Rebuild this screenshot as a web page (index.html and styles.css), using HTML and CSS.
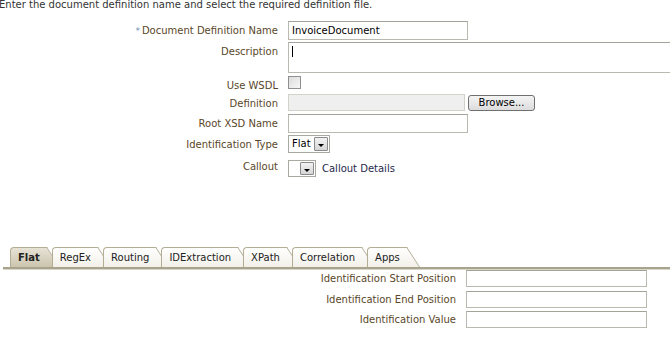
FILE: index.html
```html
<!DOCTYPE html>
<html lang="en">
<head>
    <meta charset="UTF-8">
    <meta name="viewport" content="width=device-width, initial-scale=1.0">
    <title>Document Definition</title>
    <link rel="stylesheet" href="styles.css">
</head>
<body>
    <p class="intro">Enter the document definition name and select the required definition file.</p>

    <div class="form">
        <div class="row row-name">
            <div class="label"><span class="star">*</span>Document Definition Name</div>
            <div class="field name">InvoiceDocument</div>
        </div>
        <div class="row row-desc">
            <div class="label">Description</div>
            <div class="field area"><span class="caret"></span></div>
        </div>
        <div class="row row-wsdl">
            <div class="label">Use WSDL</div>
            <div class="check"></div>
        </div>
        <div class="row row-def">
            <div class="label">Definition</div>
            <div class="field def"></div>
            <div class="browse">Browse...</div>
        </div>
        <div class="row row-root">
            <div class="label">Root XSD Name</div>
            <div class="field name"></div>
        </div>
        <div class="row row-type">
            <div class="label">Identification Type</div>
            <div class="select type"><span class="value">Flat</span><span class="arrow"></span></div>
        </div>
        <div class="row row-callout">
            <div class="label">Callout</div>
            <div class="select callout"><span class="value"></span><span class="arrow"></span></div>
            <span class="details">Callout Details</span>
        </div>
    </div>

    <div class="tabs">
        <div class="tab active">Flat</div>
        <div class="tab">RegEx</div>
        <div class="tab">Routing</div>
        <div class="tab">IDExtraction</div>
        <div class="tab">XPath</div>
        <div class="tab">Correlation</div>
        <div class="tab">Apps</div>
    </div>

    <div class="panel">
        <div class="prow">
            <div class="plabel">Identification Start Position</div>
            <div class="field pfield"></div>
        </div>
        <div class="prow">
            <div class="plabel">Identification End Position</div>
            <div class="field pfield"></div>
        </div>
        <div class="prow">
            <div class="plabel">Identification Value</div>
            <div class="field pfield"></div>
        </div>
    </div>
</body>
</html>
```

FILE: styles.css
```css
body {
    margin: 0;
    font-family: "DejaVu Sans", sans-serif;
    font-size: 10px;
    color: #333;
    background-color: #fff;
    overflow: hidden;
}

.intro {
    margin: -1px 0 0 -1px;
    line-height: 12px;
    height: 11px;
}

.form {
    margin-top: 11px;
}

.row {
    display: flex;
    align-items: flex-start;
}

.row-name { height: 21px; }
.row-desc { height: 34px; }
.row-wsdl { height: 18px; }
.row-def { height: 20px; }
.row-root { height: 21px; }
.row-type { height: 25px; }
.row-callout { height: 20px; }

.label {
    flex-shrink: 0;
    width: 278px;
    margin-right: 10px;
    text-align: right;
    line-height: 19px;
    color: #5a4729; /* brownish label text */
}

.star {
    color: #6f8fb5;
    font-size: 9px;
    margin-right: 2px;
}

.field {
    flex-shrink: 0;
    box-sizing: border-box;
    border: 1px solid #b9b9b0;
    border-top-color: #a3a39a;
    background-color: #fff;
    color: #000;
    padding-left: 3px;
}

.name {
    width: 180px;
    height: 19px;
    line-height: 17px;
}

/* runs off the right side of the window in the original */
.area {
    width: 382px;
    height: 31px;
    border-right: 0;
}

.caret {
    display: block;
    width: 1px;
    height: 11px;
    margin-top: 3px;
    background-color: #000;
}

.check {
    box-sizing: border-box;
    width: 13px;
    height: 13px;
    border: 1px solid #8e8f8f;
    background: linear-gradient(135deg, #dcdcdc, #f7f7f7);
}

.def {
    width: 177px;
    height: 17px;
    background-color: #efefef;
    border-color: #d2d2cc;
}

.browse {
    box-sizing: border-box;
    width: 67px;
    height: 16px;
    margin: 1px 0 0 3px;
    border: 1px solid #707070;
    border-radius: 3px;
    background: linear-gradient(#f4f4f4, #dcdcdc);
    color: #000;
    text-align: center;
    line-height: 14px;
}

.select {
    box-sizing: border-box;
    display: flex;
    justify-content: space-between;
    border: 1px solid #a9a9a2;
    background-color: #fff;
    color: #000;
}

.select .value {
    padding-left: 3px;
}

.type {
    width: 42px;
    height: 18px;
    line-height: 16px;
}

.callout {
    width: 28px;
    height: 17px;
}

.arrow {
    position: relative;
    box-sizing: border-box;
    width: 14px;
    margin: 1px;
    border: 1px solid #8a8a8a;
    border-radius: 1px;
    background: linear-gradient(#f2f2f2, #d6d6d6);
}

.arrow::after {
    content: "";
    position: absolute;
    left: 3px;
    top: 6px;
    border-left: 3px solid transparent;
    border-right: 3px solid transparent;
    border-top: 3px solid #000;
}

.row-callout .label {
    line-height: 12px;
    padding-top: 1px;
}

.details {
    margin-left: 6px;
    line-height: 17px;
    color: #1f2a4e;
}

/* tab strip */
.tabs {
    display: flex;
    align-items: flex-end;
    margin: 67px 0 0 3px;
    padding-left: 7px;
    height: 20px;
    border-bottom: 2px solid #a8a38c;
    box-shadow: 0 1px 0 #d9d6cb;
}

.tab {
    position: relative;
    z-index: 0;
    height: 19px;
    line-height: 19px;
    padding: 0 5px 0 7px;
    margin-right: 7px;
    border: 1px solid #b3ad96;
    border-right: 0;
    border-bottom: 0;
    border-top-left-radius: 4px;
    background: linear-gradient(#ffffff, #f2f0e8);
    color: #222;
}

.tab::after {
    content: "";
    position: absolute;
    z-index: -1;
    top: -1px;
    bottom: 0;
    left: 100%;
    width: 15px;
    box-sizing: border-box;
    border-top: 1px solid #b3ad96;
    border-right: 1px solid #b3ad96;
    background: linear-gradient(#ffffff, #f2f0e8);
    transform-origin: bottom left;
    transform: skewX(33deg);
}

.tab.active,
.tab.active::after {
    background: linear-gradient(#e6e2d5, #cbc4ae);
}

.tab.active {
    font-weight: bold;
}

/* tab panel */
.panel {
    padding-top: 1px;
}

.prow {
    display: flex;
    height: 20.5px;
}

.plabel {
    width: 456px;
    margin-right: 10px;
    text-align: right;
    line-height: 17px;
    color: #5a4729;
}

.pfield {
    width: 181px;
    height: 17px;
}
```
